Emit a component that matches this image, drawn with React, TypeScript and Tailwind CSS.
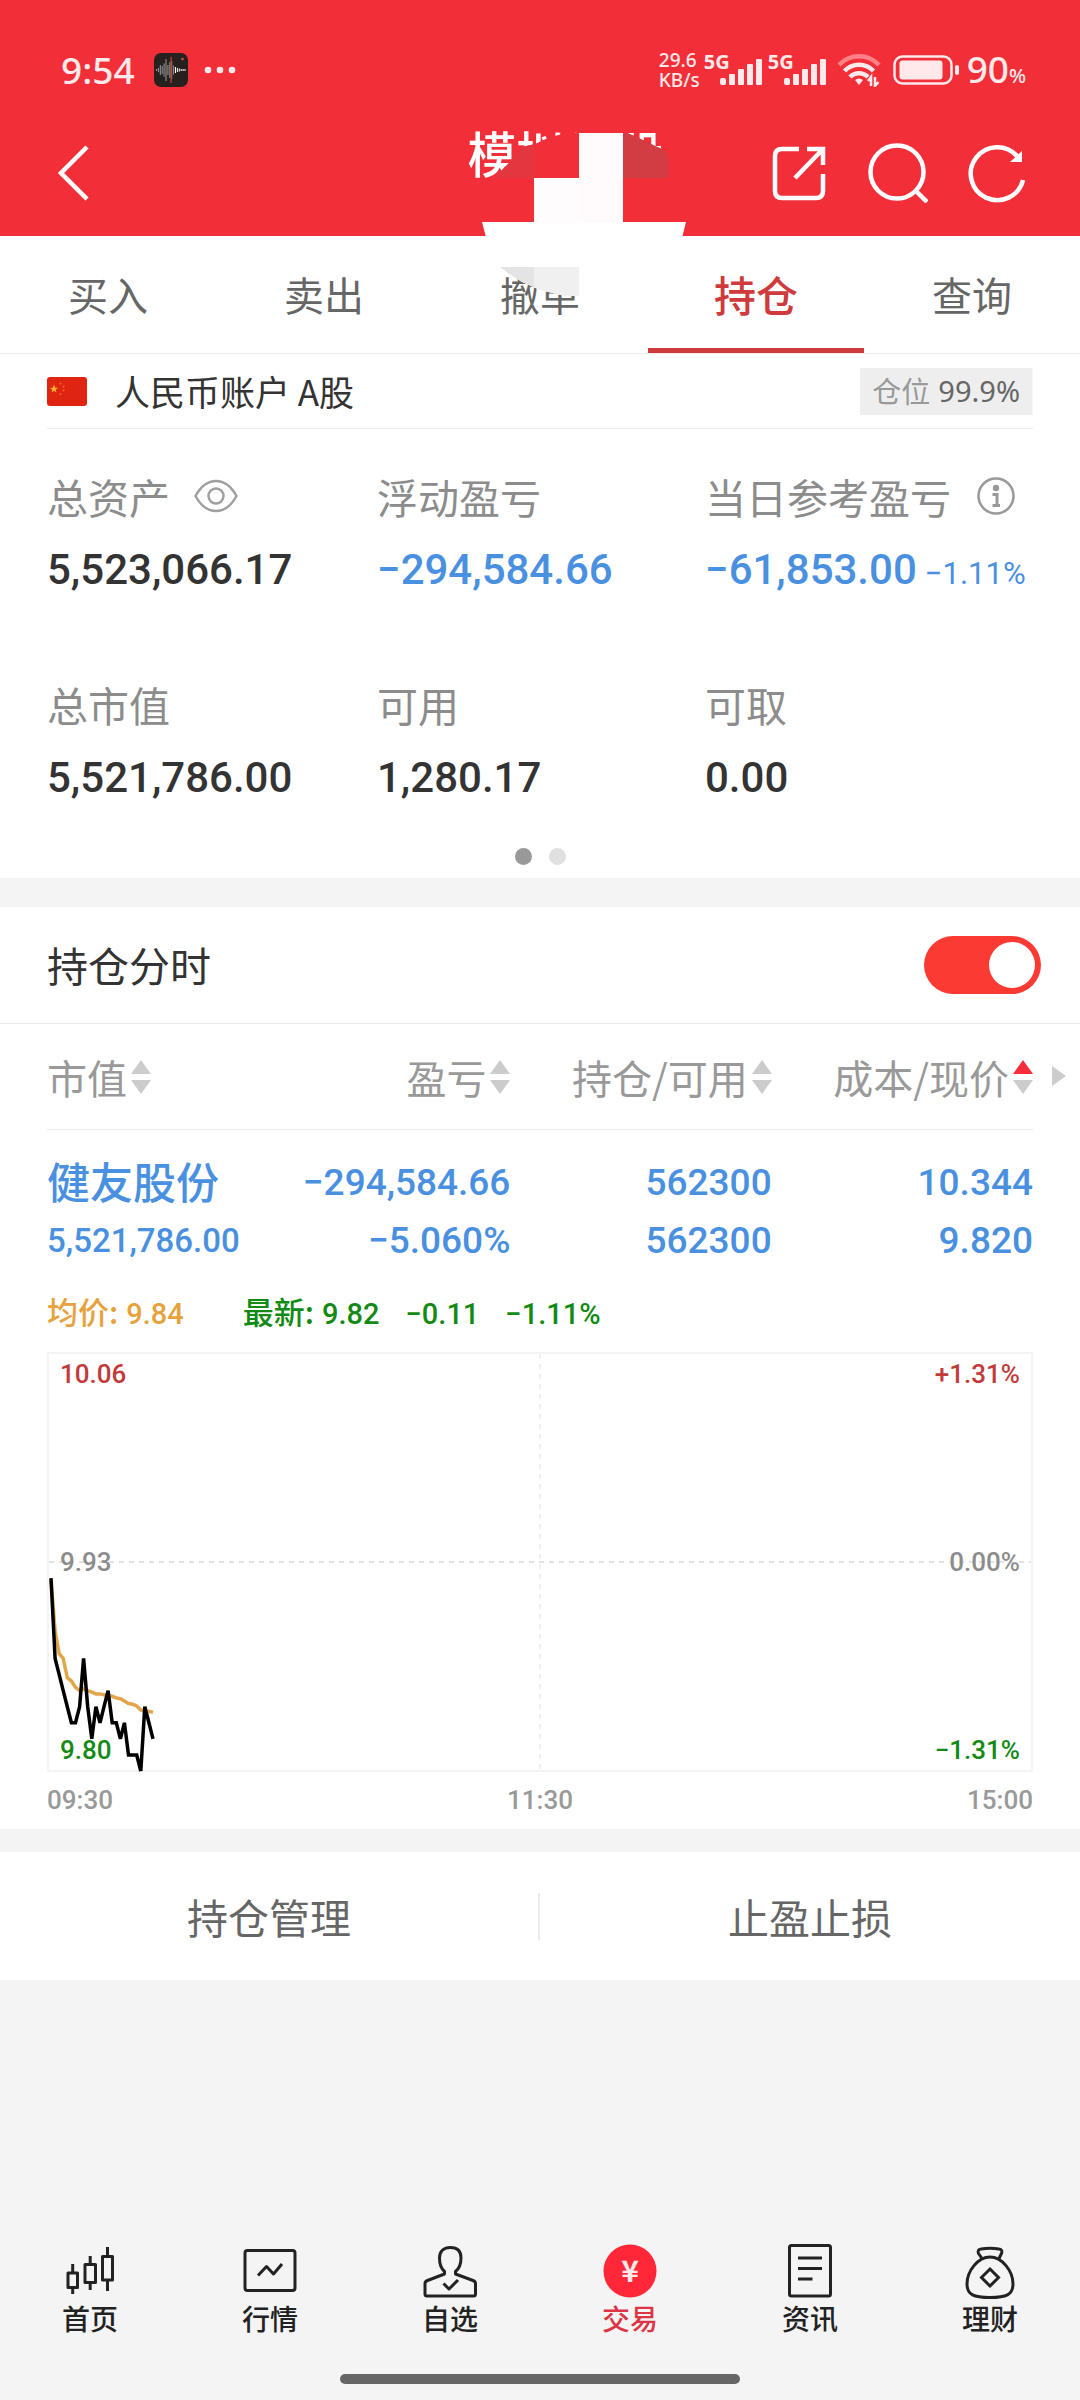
import { useState } from "react";
import type { ReactNode } from "react";

const NUM = "[font-family:'Roboto',sans-serif]";
const LATIN = "[font-family:'Noto_Sans','Noto_Sans_CJK_SC',sans-serif]";

function SignalBars() {
  return (
    <div className="flex h-8 items-start">
      <span className="text-[20px] leading-[16px] font-bold">5G</span>
      <svg viewBox="0 0 42 28" className="-ml-[10px] h-7 w-[42px] self-end" fill="currentColor">
        <rect x="0" y="20" width="6" height="7" rx="2" />
        <rect x="9" y="16" width="6" height="11" rx="1" />
        <rect x="18" y="11" width="6" height="16" rx="1" />
        <rect x="27" y="6" width="6" height="21" rx="1" />
        <rect x="36" y="1" width="6" height="26" rx="1" />
      </svg>
    </div>
  );
}

function StatusBar() {
  const wave = [2, 4, 10, 8, 13, 22, 10, 16, 18, 9, 6, 4, 3, 2, 2, 2];
  return (
    <div className={`${LATIN} flex h-[124px] items-center pt-4 pr-[54px] pl-[61px] text-[#ffe9ea]`}>
      <span className="text-[37px] leading-[40px] font-medium">9:54</span>
      <svg viewBox="0 0 34 34" className="ml-[19px] h-[34px] w-[34px]">
        <rect width="34" height="34" rx="7" fill="#26211f" />
        {wave.map((h, i) => (
          <rect key={i} x={2 + i * 1.9} y={17 - h / 2} width="1" height={h} fill={i > 9 ? "#fff" : "#999"} />
        ))}
        <rect x="16.5" y="4" width="1.2" height="26" fill="#c8402f" />
        <circle cx="28.5" cy="6" r="1.3" fill="#d5532f" />
      </svg>
      <svg viewBox="0 0 32 8" className="ml-4 h-2 w-8" fill="currentColor">
        <circle cx="4" cy="4" r="3.3" />
        <circle cx="16" cy="4" r="3.3" />
        <circle cx="28" cy="4" r="3.3" />
      </svg>
      <div className="ml-auto flex items-center">
        <p className="text-[19px] leading-[20px] font-medium">
          29.6
          <br />
          KB/s
        </p>
        <div className="ml-1 flex gap-[6px]">
          <SignalBars />
          <SignalBars />
        </div>
        <svg viewBox="0 0 44 34" className="ml-[11px] h-[34px] w-11" fill="none" stroke="currentColor" strokeWidth="4.500">
          <path d="M2 12 A27 27 0 0 1 42 12" stroke="#ff8086" />
          <path d="M7.500 18 A20 20 0 0 1 36.500 18" />
          <path d="M13 24 A12.500 12.500 0 0 1 31 24" />
          <path d="M18 27 Q22 24 26 27 L22 32 Z" fill="currentColor" stroke="none" />
          <path d="M34 33 V24 L31 28 M38 24 V33 L41.500 29" strokeWidth="2.500" />
        </svg>
        <svg viewBox="0 0 66 30" className="ml-3 h-[30px] w-[66px]" fill="none" stroke="currentColor" strokeWidth="2.500">
          <rect x="1.500" y="1.500" width="57" height="27" rx="8" />
          <rect x="6.500" y="5.500" width="43" height="19" rx="3" fill="currentColor" stroke="none" />
          <rect x="62" y="10" width="4" height="10" rx="2" fill="currentColor" stroke="none" />
        </svg>
        <div className="ml-2 flex items-baseline font-medium">
          <span className="text-[37px] leading-[40px]">90</span>
          <span className="text-[20px]">%</span>
        </div>
      </div>
    </div>
  );
}

function Mosaic() {
  return (
    <svg
      viewBox="478 128 212 172"
      aria-hidden="true"
      className="pointer-events-none absolute top-[128px] left-1/2 z-10 -ml-[62px] h-[172px] w-[212px]"
    >
      <defs>
        <clipPath id="blot">
          <path d="M482 222 L485 205 L492 180 L508 164 L522 147 L535 144 L548 138 L562 134 L578 132 H625 L634 136 L645 141 L655 146 L664 150 L672 162 L681 190 L686 222 L682 238 L668 267 L640 290 L610 296 H565 L540 290 L522 282 L508 273 L500 267 L488 245 Z" />
        </clipPath>
      </defs>
      <g clipPath="url(#blot)">
        <rect x="478" y="128" width="212" height="95" fill="#f22f38" />
        <rect x="478" y="222" width="212" height="78" fill="#fff" />
        <rect x="489" y="133" width="45" height="45" fill="#e3373f" />
        <rect x="623" y="133" width="45" height="45" fill="#d23c43" />
        <rect x="579" y="133" width="44" height="90" fill="#fffbfc" />
        <rect x="534" y="178" width="45" height="45" fill="#fffcfd" />
        <rect x="489" y="267" width="45" height="33" fill="#e4e4e4" />
        <rect x="534" y="267" width="45" height="33" fill="#f0f0f0" />
      </g>
    </svg>
  );
}

function Header() {
  return (
    <header className="relative bg-[#f22f38] pb-[14px] text-white">
      <StatusBar />
      <div className="grid h-[98px] grid-cols-[1fr_auto_1fr] items-center pr-[53px] pl-[54px]">
        <button aria-label="返回" className="w-fit">
          <svg viewBox="0 0 40 60" className="h-[60px] w-10" fill="none" stroke="currentColor" strokeWidth="4.500">
            <path d="M33 4 L7 30 L33 56" />
          </svg>
        </button>
        <h1 className="self-start pl-[50px] text-[49px] leading-[56px] font-medium">模拟炒股</h1>
        <div className="flex items-center justify-end gap-[39px]">
          <button aria-label="分享">
            <svg viewBox="0 0 60 60" className="h-[60px] w-[60px]" fill="none" stroke="currentColor" strokeWidth="4.500">
              <path d="M30 6 H13 Q6 6 6 13 V48 Q6 55 13 55 H47 Q54 55 54 48 V31" />
              <path d="M38 6 H54 V22 M54 6 L26 35" />
            </svg>
          </button>
          <button aria-label="搜索">
            <svg viewBox="0 0 60 60" className="h-[60px] w-[60px]" fill="none" stroke="currentColor" strokeWidth="4.500">
              <circle cx="29" cy="29" r="26.500" />
              <path d="M47 47 L59 59" />
            </svg>
          </button>
          <button aria-label="刷新">
            <svg viewBox="0 0 60 60" className="h-[60px] w-[60px]" fill="none" stroke="currentColor" strokeWidth="4.500">
              <path d="M56 37 A26.500 26.500 0 1 1 50 13" />
              <path d="M55 8 V19 H43 Z" fill="currentColor" stroke="none" />
            </svg>
          </button>
        </div>
      </div>
      <Mosaic />
    </header>
  );
}

function Tabs() {
  const tabs = ["买入", "卖出", "撤单", "持仓", "查询"];
  return (
    <nav className="grid h-[118px] grid-cols-5 border-b border-[#ebebeb]">
      {tabs.map((t) =>
        t === "持仓" ? (
          <button key={t} className="border-b-[5px] border-[#cf3a3d] pt-[3px] text-[42px] font-medium text-[#cf3a3d]">
            {t}
          </button>
        ) : (
          <button key={t} className="border-b-[5px] border-transparent pt-[3px] text-[40px] text-[#666]">
            {t}
          </button>
        ),
      )}
    </nav>
  );
}

function Stat({ label, icon, children }: { label: string; icon?: ReactNode; children: ReactNode }) {
  return (
    <div>
      <dt className="flex h-14 items-center text-[41px] leading-[56px] whitespace-nowrap text-[#8c8c8c]">
        {label}
        {icon}
      </dt>
      <dd className={`${NUM} mt-4 flex h-[58px] items-baseline text-[42px] leading-[60px] font-medium whitespace-nowrap text-[#333]`}>
        {children}
      </dd>
    </div>
  );
}

function Account() {
  return (
    <section className="px-[47px]">
      <div className="flex h-[75px] items-center border-b border-[#ebebeb]">
        <svg viewBox="0 0 40 29" className="h-[29px] w-10">
          <rect width="40" height="29" rx="3" fill="#e02412" />
          <path d="M7 7.500 L8.200 10.800 H11 L8.700 12.700 L9.500 15.500 L7 13.800 L4.500 15.500 L5.300 12.700 L3 10.800 H5.800 Z" fill="#f7b52c" />
          <g fill="#ee6a2a">
            <circle cx="13.500" cy="6.500" r="1" />
            <circle cx="16.500" cy="9.500" r="1" />
            <circle cx="16.500" cy="13.500" r="1" />
            <circle cx="13.500" cy="17" r="1" />
          </g>
        </svg>
        <h2 className="ml-7 text-[35px] leading-[48px] text-[#333]">人民币账户 A股</h2>
        <div className="ml-auto flex h-[47px] items-center gap-2 border-r border-[#f6f6f6] bg-[#eee] px-3 text-[29px] text-[#999]">
          仓位
          <span className={`${LATIN} text-[29px] text-[#666]`}>99.9%</span>
        </div>
      </div>
      <dl className="grid grid-cols-[minmax(0,330fr)_minmax(0,328fr)_minmax(0,328fr)] gap-y-[78px] pt-[39px]">
        <Stat
          label="总资产"
          icon={
            <button aria-label="显示或隐藏金额" className="ml-6">
              <svg viewBox="0 0 44 34" className="h-[34px] w-11" fill="none" stroke="#a0a0a0" strokeWidth="2.500">
                <path d="M1.500 17 C7 7 14 2 22 2 C30 2 37 7 42.500 17 C37 27 30 32 22 32 C14 32 7 27 1.500 17 Z" />
                <circle cx="22" cy="17" r="7.500" />
              </svg>
            </button>
          }
        >
          5,523,066.17
        </Stat>
        <Stat label="浮动盈亏">
          <span className="text-[#4a90e0]">−294,584.66</span>
        </Stat>
        <Stat
          label="当日参考盈亏"
          icon={
            <button aria-label="说明" className="ml-[25px]">
              <svg viewBox="0 0 40 40" className="h-10 w-10" fill="none" stroke="#999" strokeWidth="2.500">
                <circle cx="20" cy="20" r="17.500" />
                <circle cx="20" cy="12" r="3.200" fill="#999" stroke="none" />
                <path d="M16.500 18.500 H21 V29 M16.500 29.500 H24" strokeWidth="3" />
              </svg>
            </button>
          }
        >
          <span className="text-[#4a90e0]">−61,853.00</span>
          <span className="ml-2 text-[31px] font-normal text-[#4a90e0]">−1.11%</span>
        </Stat>
        <Stat label="总市值">5,521,786.00</Stat>
        <Stat label="可用">1,280.17</Stat>
        <Stat label="可取">0.00</Stat>
      </dl>
      <div className="mt-[42px] flex justify-center gap-[17px] pb-[13px]">
        <span className="h-[17px] w-[17px] rounded-full bg-[#999]" />
        <span className="h-[17px] w-[17px] rounded-full bg-[#e0e0e0]" />
      </div>
    </section>
  );
}

function SortIcon({ active }: { active?: boolean }) {
  return (
    <svg viewBox="0 0 20 34" className="h-[34px] w-5 shrink-0" fill="#ccc">
      <path d="M10 0 L20 14 H0 Z" fill={active ? "#fa2c3a" : "#ccc"} />
      <path d="M0 20 H20 L10 34 Z" />
    </svg>
  );
}

function SortButton({ label, active }: { label: string; active?: boolean }) {
  return (
    <button className="inline-flex h-[105px] items-center gap-1 align-top text-[40px] font-normal whitespace-nowrap text-[#999]">
      {label}
      <SortIcon active={active} />
    </button>
  );
}

function Holdings() {
  return (
    <div className="relative px-[47px]">
      <table className="w-full table-fixed border-collapse">
        <colgroup>
          <col className="w-[22%]" />
          <col className="w-[25%]" />
          <col className="w-[26.500%]" />
          <col className="w-[26.500%]" />
        </colgroup>
        <thead>
          <tr className="border-b border-[#ebebeb]">
            <th className="p-0 text-left"><SortButton label="市值" /></th>
            <th className="p-0 text-right"><SortButton label="盈亏" /></th>
            <th className="p-0 text-right"><SortButton label="持仓/可用" /></th>
            <th className="p-0 text-right"><SortButton label="成本/现价" active /></th>
          </tr>
        </thead>
        <tbody>
          <tr className={`${NUM} text-right text-[37px] leading-[58px] font-medium whitespace-nowrap text-[#4a90e0]`}>
            <td className="pt-6 text-left">
              <div className="h-[58px] text-[43px] leading-[52px] [font-family:'Noto_Sans_CJK_SC',sans-serif]">健友股份</div>
              <div className="text-[33px]">5,521,786.00</div>
            </td>
            <td className="pt-6">
              <div>−294,584.66</div>
              <div>−5.060%</div>
            </td>
            <td className="pt-6">
              <div>562300</div>
              <div>562300</div>
            </td>
            <td className="pt-6">
              <div>10.344</div>
              <div>9.820</div>
            </td>
          </tr>
        </tbody>
      </table>
      <svg viewBox="0 0 14 20" className="absolute top-[42px] right-[14px] h-5 w-[14px]" fill="#ccc">
        <path d="M0 0 L14 10 L0 20 Z" />
      </svg>
    </div>
  );
}

const MINUTE = 4.08;
const prices = [
  9.92, 9.87, 9.86, 9.85, 9.84, 9.83, 9.83, 9.84, 9.87, 9.84, 9.82, 9.84, 9.83, 9.84, 9.85, 9.83, 9.83, 9.82, 9.83,
  9.81, 9.81, 9.81, 9.8, 9.84, 9.83, 9.82,
];
const averages = [
  9.919, 9.887, 9.873, 9.87, 9.858, 9.856, 9.852, 9.85, 9.851, 9.85, 9.849, 9.848, 9.848, 9.8475, 9.847, 9.8465,
  9.8455, 9.845, 9.8435, 9.842, 9.8415, 9.8405, 9.838, 9.837, 9.8372, 9.8365,
];
const toPoints = (values: number[]) =>
  values.map((v, i) => `${(2 + i * MINUTE).toFixed(1)},${(208 + (9.93 - v) * 1608).toFixed(1)}`).join(" ");

function IntradayChart() {
  return (
    <div className="px-[47px]">
      <div className="flex h-12 items-center text-[31px] leading-[48px] font-medium whitespace-nowrap">
        <div className="flex items-baseline gap-2 text-[#e6a23c]">
          均价: <span className={`${NUM} text-[29px]`}>9.84</span>
        </div>
        <div className="ml-[59px] flex items-baseline gap-2 text-[#138a13]">
          最新: <span className={`${NUM} text-[29px]`}>9.82</span>
          <span className={`${NUM} ml-[18px] text-[29px]`}>−0.11</span>
          <span className={`${NUM} ml-[18px] text-[29px]`}>−1.11%</span>
        </div>
      </div>
      <div className={`${NUM} relative mt-4 h-[420px] border-2 border-[#f4f4f4] text-[26px] font-medium`}>
        <svg viewBox="0 0 982 416" preserveAspectRatio="none" className="absolute inset-0 h-full w-full overflow-visible" fill="none">
          <path d="M491 0 V416" stroke="#f0f0f0" strokeWidth="2" strokeDasharray="5 5" />
          <path d="M0 208 H982" stroke="#e2e2e2" strokeWidth="2" strokeDasharray="5 5" />
          <polyline points={toPoints(averages)} stroke="#e2a549" strokeWidth="3.500" />
          <polyline points={toPoints(prices)} stroke="#000" strokeWidth="3.500" />
        </svg>
        <div className="absolute inset-0 flex justify-between px-[11px] py-1 leading-[32px]">
          <div className="flex flex-col justify-between">
            <span className="text-[#c23b3b]">10.06</span>
            <span className="text-[#8c8c8c]">9.93</span>
            <span className="text-[#138a13]">9.80</span>
          </div>
          <div className="flex flex-col justify-between text-right">
            <span className="text-[#c23b3b]">+1.31%</span>
            <span className="text-[#8c8c8c]">0.00%</span>
            <span className="text-[#138a13]">−1.31%</span>
          </div>
        </div>
      </div>
      <div className={`${NUM} flex h-[57px] items-center justify-between text-[26px] font-medium text-[#999]`}>
        <span>09:30</span>
        <span>11:30</span>
        <span>15:00</span>
      </div>
    </div>
  );
}

function NavIcon({ children }: { children: ReactNode }) {
  return (
    <svg viewBox="0 0 60 60" className="h-[60px] w-[60px]" fill="none" stroke="currentColor" strokeWidth="3" strokeLinejoin="round">
      {children}
    </svg>
  );
}

const navItems: { label: string; icon: ReactNode }[] = [
  {
    label: "首页",
    icon: (
      <>
        <rect x="8" y="33" width="9.500" height="14.500" />
        <path d="M12.700 24 V33 M12.700 47 V54" />
        <rect x="25" y="24.500" width="10.500" height="18" />
        <path d="M30.200 16 V24 M30.200 43 V50" />
        <rect x="42.500" y="16.500" width="10" height="23.500" />
        <path d="M47.500 7 V16 M47.500 40 V51" />
      </>
    ),
  },
  {
    label: "行情",
    icon: (
      <>
        <rect x="5" y="10.500" width="50" height="40" rx="2.500" />
        <path d="M18 35.500 L26.500 26.500 L33.500 34 L42 24" />
      </>
    ),
  },
  {
    label: "自选",
    icon: (
      <>
        <path d="M24.500 34 V31.500 C20.500 28 19.500 24 19.500 18 C19.500 11 24 7.500 30.500 7.500 C37 7.500 41 11 41 18 C41 24 40 28 35.500 31.500 V34 L53 40.500 Q55.500 41.500 55.500 43.500 V54 Q55.500 56 53.500 56 H7 Q5 56 5 54 V43.500 Q5 41.500 7.500 40.500 Z" />
        <path d="M23.500 43.500 L29 49 L38 40" />
      </>
    ),
  },
  {
    label: "交易",
    icon: (
      <>
        <circle cx="30" cy="31" r="26.500" fill="#ff2738" stroke="none" />
        <text x="30" y="42" textAnchor="middle" fontSize="30" fontWeight="700" fill="#ffe9ea" stroke="none">
          ¥
        </text>
      </>
    ),
  },
  {
    label: "资讯",
    icon: (
      <>
        <rect x="9.500" y="5.500" width="41" height="50.500" rx="2" />
        <path d="M18 18 H42 M18 28.500 H42 M18 39 H32.500" />
      </>
    ),
  },
  {
    label: "理财",
    icon: (
      <>
        <path d="M30 17 C42 17 53 31 53 44 C53 55 46 57.500 30 57.500 C14 57.500 7 55 7 44 C7 31 18 17 30 17 Z" />
        <path d="M22 18.500 L18.500 13.500 Q17 9.500 21 9 Q30 7.500 39 9 Q43 9.500 41.500 13.500 L39 18.500" />
        <path d="M30 29 L38.500 37.500 L30 46 L21.500 37.500 Z" strokeLinejoin="miter" />
      </>
    ),
  },
];

function BottomNav() {
  return (
    <footer className="mt-auto pb-4">
      <nav className="grid grid-cols-6">
        {navItems.map(({ label, icon }) => (
          <a
            key={label}
            href="#"
            aria-current={label === "交易" ? "page" : undefined}
            className="flex flex-col items-center text-[28px] leading-[36px] font-medium text-[#222] aria-[current=page]:text-[#dc3545]"
          >
            <NavIcon>{icon}</NavIcon>
            {label}
          </a>
        ))}
      </nav>
      <div className="mx-auto mt-[38px] h-[10px] w-[37%] rounded-full bg-[#666]" />
    </footer>
  );
}

export default function App() {
  const [on, setOn] = useState(true);
  return (
    <div className="flex min-h-screen flex-col bg-[#f4f4f4] [font-family:'Noto_Sans_CJK_SC',sans-serif]">
      <Header />
      <main>
        <div className="bg-white">
          <Tabs />
          <Account />
        </div>
        <section className="mt-[29px] bg-white">
          <div className="flex h-[117px] items-center justify-between border-b border-[#ebebeb] pr-[39px] pl-[47px]">
            <label htmlFor="intraday" className="text-[41px] text-[#333]">
              持仓分时
            </label>
            <input
              id="intraday"
              type="checkbox"
              role="switch"
              checked={on}
              onChange={(e) => setOn(e.target.checked)}
              className="flex h-[58px] w-[117px] appearance-none items-center rounded-full bg-[#ccc] px-[6px] before:h-[46px] before:w-[46px] before:rounded-full before:bg-white checked:justify-end checked:bg-[#fb3b33]"
            />
          </div>
          <Holdings />
          <div className="pt-[18px]">
            <IntradayChart />
          </div>
        </section>
        <section className="mt-[23px] grid h-[128px] grid-cols-2 items-center bg-white text-[41px] text-[#666]">
          <button className="h-[47px] border-r-2 border-[#ebebeb] leading-[47px]">持仓管理</button>
          <button className="leading-[47px]">止盈止损</button>
        </section>
      </main>
      <BottomNav />
    </div>
  );
}
